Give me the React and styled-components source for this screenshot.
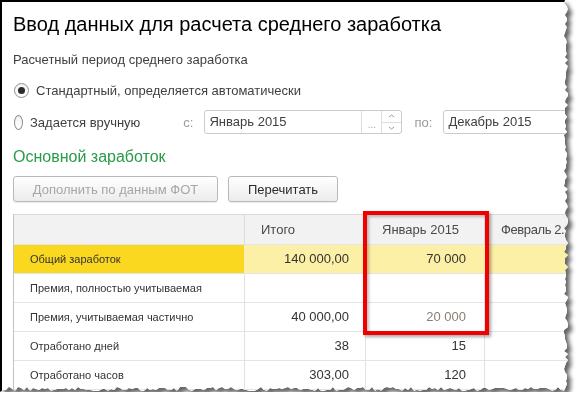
import { Fragment } from 'react';
import styled, { createGlobalStyle } from 'styled-components';

const GlobalStyle = createGlobalStyle`
  html, body {
    margin: 0;
    padding: 0;
    background: #fff;
  }
  body {
    font-family: "Liberation Sans", Arial, sans-serif;
    color: #404040;
  }
`;

// torn paper edge on the right and bottom of the screenshot
const W = 569;
const H = 392;
let seed = 11;
const rnd = () => {
  seed = (seed * 9301 + 49297) % 233280;
  return seed / 233280;
};
const tornEdge = (() => {
  const pts = ['0px 0px'];
  for (let y = 0; y < H - 5; y += 3) pts.push(`${W - 1 - Math.round(rnd() * 4)}px ${y}px`);
  for (let x = W - 5; x > 0; x -= 3) pts.push(`${x}px ${H - 1 - Math.round(rnd() * 4)}px`);
  pts.push(`0px ${H}px`);
  return `polygon(${pts.join(', ')})`;
})();

const Shot = styled.div`
  width: ${W}px;
  height: ${H}px;
  filter: drop-shadow(4px 4px 2px rgba(0, 0, 0, 0.6));
`;

const Panel = styled.div`
  position: relative;
  box-sizing: border-box;
  width: 100%;
  height: 100%;
  background: #fff;
  border-top: 2px solid #000;
  border-left: 2px solid #000;
  padding: 10px 0 0 11px;
  overflow: hidden;
  clip-path: ${tornEdge};
`;

const Title = styled.h1`
  margin: 0;
  font-size: 20px;
  font-weight: normal;
  line-height: 24px;
  color: #000;
  white-space: nowrap;
`;

const Caption = styled.div`
  margin-top: 16px;
  font-size: 13px;
  line-height: 16px;
  color: #404040;
`;

const RadioRow = styled.div`
  display: flex;
  align-items: center;
  height: ${({ $h }) => $h}px;
  margin-top: ${({ $mt }) => $mt}px;
  font-size: 13px;
  white-space: nowrap;
`;

const RadioMark = styled.span`
  box-sizing: border-box;
  width: 15px;
  height: 15px;
  margin: 0 7px 0 1px;
  border-radius: 50%;
  border: 1px solid #8f8f8f;
  background: linear-gradient(#f2f2f2, #ffffff);
  display: flex;
  align-items: center;
  justify-content: center;

  &::after {
    content: '';
    width: 7px;
    height: 7px;
    border-radius: 50%;
    background: ${({ $on }) => ($on ? '#2b2b2b' : 'transparent')};
  }
`;

const Prefix = styled.span`
  margin-left: ${({ $ml }) => $ml}px;
  margin-right: 11px;
  color: #9a9a9a;
`;

const DateField = styled.div`
  box-sizing: border-box;
  display: flex;
  flex-shrink: 0;
  width: ${({ $w }) => $w}px;
  height: 24px;
  border: 1px solid #cbcbcb;
  border-radius: 3px;
  background: #fff;
`;

const DateText = styled.div`
  flex: 1;
  padding-left: 4px;
  line-height: 22px;
  color: #404040;
`;

const PickButton = styled.div`
  width: 20px;
  border-left: 1px solid #dedede;
  color: #a8a8a8;
  font-size: 10px;
  line-height: 10px;
  display: flex;
  align-items: flex-end;
  justify-content: center;
  padding-bottom: 3px;
  box-sizing: border-box;
`;

const Spinner = styled.div`
  width: 19px;
  border-left: 1px solid #dedede;
  display: flex;
  flex-direction: column;
`;

const SpinHalf = styled.div`
  flex: 1;
  display: flex;
  align-items: center;
  justify-content: center;
  border-top: ${({ $bottom }) => ($bottom ? '1px solid #dedede' : 'none')};
`;

const SectionTitle = styled.h2`
  margin: 13px 0 0;
  font-size: 16px;
  font-weight: normal;
  line-height: 20px;
  color: #2a9b48;
`;

const Toolbar = styled.div`
  display: flex;
  gap: 10px;
  margin-top: 9px;
`;

const Button = styled.button`
  box-sizing: border-box;
  width: ${({ $w }) => $w}px;
  height: 26px;
  padding: 0;
  border: 1px solid #b9b9b9;
  border-radius: 3px;
  background: linear-gradient(#ffffff, #ececec);
  box-shadow: 0 1px 1px rgba(0, 0, 0, 0.08);
  font-family: "Liberation Sans", Arial, sans-serif;
  font-size: 13px;
  color: ${({ disabled }) => (disabled ? '#a6a6a6' : '#2b2b2b')};
`;

const Table = styled.div`
  position: relative;
  margin-top: 12px;
  display: grid;
  grid-template-columns: 231px 121px 119px 84px 100px;
  width: max-content;
  border-top: 1px solid #dadada;
  border-left: 1px solid #c2c2c2;
`;

const HeadCell = styled.div`
  box-sizing: border-box;
  height: 30px;
  padding-left: 16px;
  background: #f2f2f2;
  border-right: 1px solid #dcdcdc;
  border-bottom: 1px solid #e4e4e4;
  font-size: 13px;
  line-height: 30px;
  letter-spacing: ${({ $tight }) => ($tight ? '-0.4px' : 'normal')};
  color: #4a4a4a;
  white-space: nowrap;
  overflow: hidden;
`;

const tones = {
  sel: '#fad820',
  hi: '#fcefa6',
  plain: '#ffffff',
};

const Cell = styled.div`
  box-sizing: border-box;
  height: 29px;
  background: ${({ $tone }) => tones[$tone || 'plain']};
  border-right: 1px solid ${({ $tone }) => ($tone ? '#f6ecc0' : '#e2e2e2')};
  border-bottom: 1px solid #e4e4e4;
  white-space: nowrap;
`;

const FillCell = styled(Cell)`
  border-right: none;
`;

const LabelCell = styled(Cell)`
  padding-left: 16px;
  font-size: 11px;
  line-height: 28px;
  color: #333;
`;

const NumCell = styled(Cell)`
  padding-right: ${({ $pr }) => $pr || 16}px;
  text-align: right;
  font-size: 13px;
  line-height: 28px;
  color: ${({ $muted }) => ($muted ? '#8a7f70' : '#333')};
`;

const Highlight = styled.div`
  position: absolute;
  left: 349px;
  top: -4px;
  width: 126px;
  height: 124px;
  box-sizing: border-box;
  border: 4px solid #f20000;
  box-shadow: 2px 2px 3px rgba(0, 0, 0, 0.35), inset 2px 2px 3px rgba(0, 0, 0, 0.25);
  pointer-events: none;
`;

const Caret = ({ down }) => (
  <svg width="7" height="4" viewBox="0 0 7 4">
    <path
      d={down ? 'M1 1 L3.5 3 L6 1' : 'M1 3 L3.5 1 L6 3'}
      fill="none"
      stroke="#9c9c9c"
      strokeWidth="1"
    />
  </svg>
);

const rows = [
  { label: 'Общий заработок', total: '140 000,00', jan: '70 000', sel: true },
  { label: 'Премия, полностью учитываемая', total: '', jan: '' },
  { label: 'Премия, учитываемая частично', total: '40 000,00', jan: '20 000', muted: true },
  { label: 'Отработано дней', total: '38', jan: '15' },
  { label: 'Отработано часов', total: '303,00', jan: '120' },
];

export default function App() {
  return (
    <>
      <GlobalStyle />
      <Shot>
        <Panel>
          <Title>Ввод данных для расчета среднего заработка</Title>
          <Caption>Расчетный период среднего заработка</Caption>

          <RadioRow $h={20} $mt={12}>
            <RadioMark $on />
            Стандартный, определяется автоматически
          </RadioRow>

          <RadioRow $h={24} $mt={10}>
            <RadioMark />
            Задается вручную
            <Prefix $ml={43}>с:</Prefix>
            <DateField $w={198}>
              <DateText>Январь 2015</DateText>
              <PickButton>...</PickButton>
              <Spinner>
                <SpinHalf><Caret /></SpinHalf>
                <SpinHalf $bottom><Caret down /></SpinHalf>
              </Spinner>
            </DateField>
            <Prefix $ml={12}>по:</Prefix>
            <DateField $w={160}>
              <DateText>Декабрь 2015</DateText>
            </DateField>
          </RadioRow>

          <SectionTitle>Основной заработок</SectionTitle>

          <Toolbar>
            <Button $w={205} disabled>Дополнить по данным ФОТ</Button>
            <Button $w={110}>Перечитать</Button>
          </Toolbar>

          <Table>
            <HeadCell />
            <HeadCell>Итого</HeadCell>
            <HeadCell>Январь 2015</HeadCell>
            <HeadCell $tight>Февраль 2..</HeadCell>
            <HeadCell />

            {rows.map((r) => {
              const tone = r.sel ? 'hi' : undefined;
              return (
                <Fragment key={r.label}>
                  <LabelCell $tone={r.sel ? 'sel' : undefined}>{r.label}</LabelCell>
                  <NumCell $tone={tone}>{r.total}</NumCell>
                  <NumCell $tone={tone} $pr={18} $muted={r.muted}>{r.jan}</NumCell>
                  <FillCell $tone={tone} />
                  <FillCell $tone={tone} />
                </Fragment>
              );
            })}

            <Highlight />
          </Table>
        </Panel>
      </Shot>
    </>
  );
}
